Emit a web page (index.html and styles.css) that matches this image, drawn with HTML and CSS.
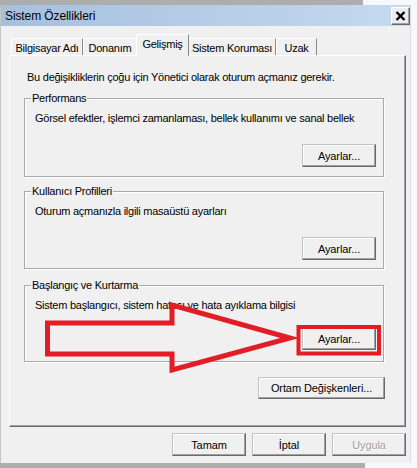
FILE: index.html
```html
<!DOCTYPE html>
<html>
<head>
    <title>Sistem Özellikleri</title>
    <meta charset="utf-8">
    <link rel="stylesheet" href="styles.css">
</head>
<body>
    <div class="top-strip"></div>

    <div class="dialog">
        <div class="titlebar">
            <span class="title">Sistem Özellikleri</span>
            <span class="close">
                <svg width="11" height="10" viewBox="0 0 11 10">
                    <path d="M1.5 1 L9.5 9 M9.5 1 L1.5 9" stroke="#000" stroke-width="2.4"/>
                </svg>
            </span>
        </div>

        <div class="content">
            <div class="tabs">
                <div class="tab tab-1">Bilgisayar Adı</div>
                <div class="tab tab-2">Donanım</div>
                <div class="tab tab-3 active">Gelişmiş</div>
                <div class="tab tab-4">Sistem Koruması</div>
                <div class="tab tab-5">Uzak</div>
            </div>

            <div class="panel">
                <p class="intro">Bu değişikliklerin çoğu için Yönetici olarak oturum açmanız gerekir.</p>

                <div class="group group-1">
                    <span class="group-title">Performans</span>
                    <p class="group-desc">Görsel efektler, işlemci zamanlaması, bellek kullanımı ve sanal bellek</p>
                    <div class="group-actions">
                        <button class="btn btn-settings">Ayarlar...</button>
                    </div>
                </div>

                <div class="group group-2">
                    <span class="group-title">Kullanıcı Profilleri</span>
                    <p class="group-desc">Oturum açmanızla ilgili masaüstü ayarları</p>
                    <div class="group-actions">
                        <button class="btn btn-settings">Ayarlar...</button>
                    </div>
                </div>

                <div class="group group-3">
                    <span class="group-title">Başlangıç ve Kurtarma</span>
                    <p class="group-desc">Sistem başlangıcı, sistem hatası ve hata ayıklama bilgisi</p>
                    <div class="group-actions">
                        <button class="btn btn-settings">Ayarlar...</button>
                    </div>
                </div>

                <div class="env-row">
                    <button class="btn btn-env">Ortam Değişkenleri...</button>
                </div>
            </div>

            <div class="dialog-buttons">
                <button class="btn btn-dialog">Tamam</button>
                <button class="btn btn-dialog">İptal</button>
                <button class="btn btn-dialog" disabled>Uygula</button>
            </div>
        </div>
    </div>

    <div class="bottom-strip"></div>

    <!-- kırmızı işaret: ok ve çerçeve -->
    <svg class="annotation" width="417" height="468" viewBox="0 0 417 468">
        <path d="M47.5 323 H172 V305 L290 338 L172 370 V354 H47.5 Z" fill="none" stroke="#e31d26" stroke-width="5" stroke-linejoin="miter"/>
        <rect x="298.5" y="327" width="80.5" height="26.5" fill="none" stroke="#e31d26" stroke-width="4"/>
    </svg>
</body>
</html>
```

FILE: styles.css
```css
body {
    margin: 0;
    width: 417px;
    height: 468px;
    overflow: hidden;
    position: relative;
    background-color: #f7f8fc;
    font-family: "Liberation Sans", Arial, sans-serif;
    font-size: 11px;
    letter-spacing: -0.25px;
    color: #000;
}
.top-strip {
    width: 363px;
    height: 5px;
    background-color: #adadad;
}
.bottom-strip {
    width: 365px;
    height: 5px;
    background-color: #adadad;
}
.dialog {
    width: 411px;
    height: 458px;
    box-sizing: border-box;
    background-color: #f0f0f0;
    border-left: 1px solid #c6c6c6;
    border-right: 1px solid #dcdcdc;
}
.titlebar {
    height: 21px;
    display: flex;
    align-items: center;
    justify-content: space-between;
    padding-left: 4px;
    background: linear-gradient(to right, #a5c0dd, #c6d9ef);
}
.title {
    font-size: 12px;
    letter-spacing: -0.1px;
}
.close {
    width: 17px;
    height: 16px;
    display: flex;
    align-items: center;
    justify-content: center;
    background-color: #ececec;
    border: 1px solid;
    border-color: #fff #6a6a6a #6a6a6a #fff;
    box-shadow: inset -1px -1px #a0a0a0;
}
.content {
    padding: 8px 0 0 8px;
}
.tabs {
    display: flex;
    height: 21px;
    padding-left: 2px;
    align-items: flex-end;
}
.tab {
    height: 17px;
    box-sizing: border-box;
    display: flex;
    align-items: center;
    justify-content: center;
    padding-top: 1px;
    border-top: 1px solid #fff;
    border-left: 1px solid #fff;
    border-right: 1px solid #8a8a8a;
    white-space: nowrap;
}
.tab-1 { width: 72px; }
.tab-2 { width: 54px; }
.tab-3 { width: 51px; }
.tab-4 { width: 88px; }
.tab-5 { width: 41px; }
.tab.active {
    width: 53px;
    height: 22px;
    margin: 0 -1px -1px;
    padding-bottom: 4px;
    position: relative;
    background-color: #f0f0f0;
}
.panel {
    width: 397px;
    height: 372px;
    box-sizing: border-box;
    padding: 15px 0 0 14px;
    border: 1px solid;
    border-color: #fff #6a6a6a #6a6a6a #fff;
    box-shadow: inset -1px -1px #a0a0a0;
}
.intro {
    margin: 0 0 0 3px;
    line-height: 13px;
}
.group {
    width: 360px;
    box-sizing: border-box;
    padding: 0 0 0 9px;
    border: 1px solid #a9a9a9;
    box-shadow: inset 1px 1px #fff, 1px 1px #fff;
}
.group-1 {
    margin-top: 14px;
    height: 79px;
}
.group-2 {
    margin-top: 14px;
    height: 78px;
}
.group-3 {
    margin-top: 16px;
    height: 77px;
}
.group-title {
    display: block;
    width: fit-content;
    margin: -7px 0 0 -3px;
    padding: 0 1px;
    line-height: 13px;
    background-color: #f0f0f0;
}
.group-desc {
    margin: 7px 0 0 1px;
    line-height: 13px;
}
.group-actions {
    display: flex;
    justify-content: flex-end;
    padding-right: 7px;
}
.group-1 .group-actions { margin-top: 19px; }
.group-2 .group-actions { margin-top: 19px; }
.group-3 .group-actions { margin-top: 15px; }
.btn {
    font-family: inherit;
    font-size: 11px;
    letter-spacing: -0.1px;
    color: #000;
    background-color: #f0f0f0;
    border: 1px solid;
    border-color: #c2c2c2 #6a6a6a #6a6a6a #c2c2c2;
    box-shadow: inset -1px -1px #a0a0a0, inset 1px 1px #fff;
    padding: 0;
    height: 23px;
}
.btn[disabled] {
    color: #a0a0a0;
    text-shadow: 1px 1px #fff;
}
.btn-settings {
    width: 74px;
}
.env-row {
    display: flex;
    justify-content: flex-end;
    width: 361px;
    margin-top: 15px;
}
.btn-env {
    width: 127px;
    height: 22px;
}
.dialog-buttons {
    display: flex;
    justify-content: flex-end;
    gap: 6px;
    width: 397px;
    margin-top: 6px;
}
.btn-dialog {
    width: 74px;
    height: 23px;
}
.annotation {
    position: absolute;
    left: 0;
    top: 0;
    pointer-events: none;
}
```
